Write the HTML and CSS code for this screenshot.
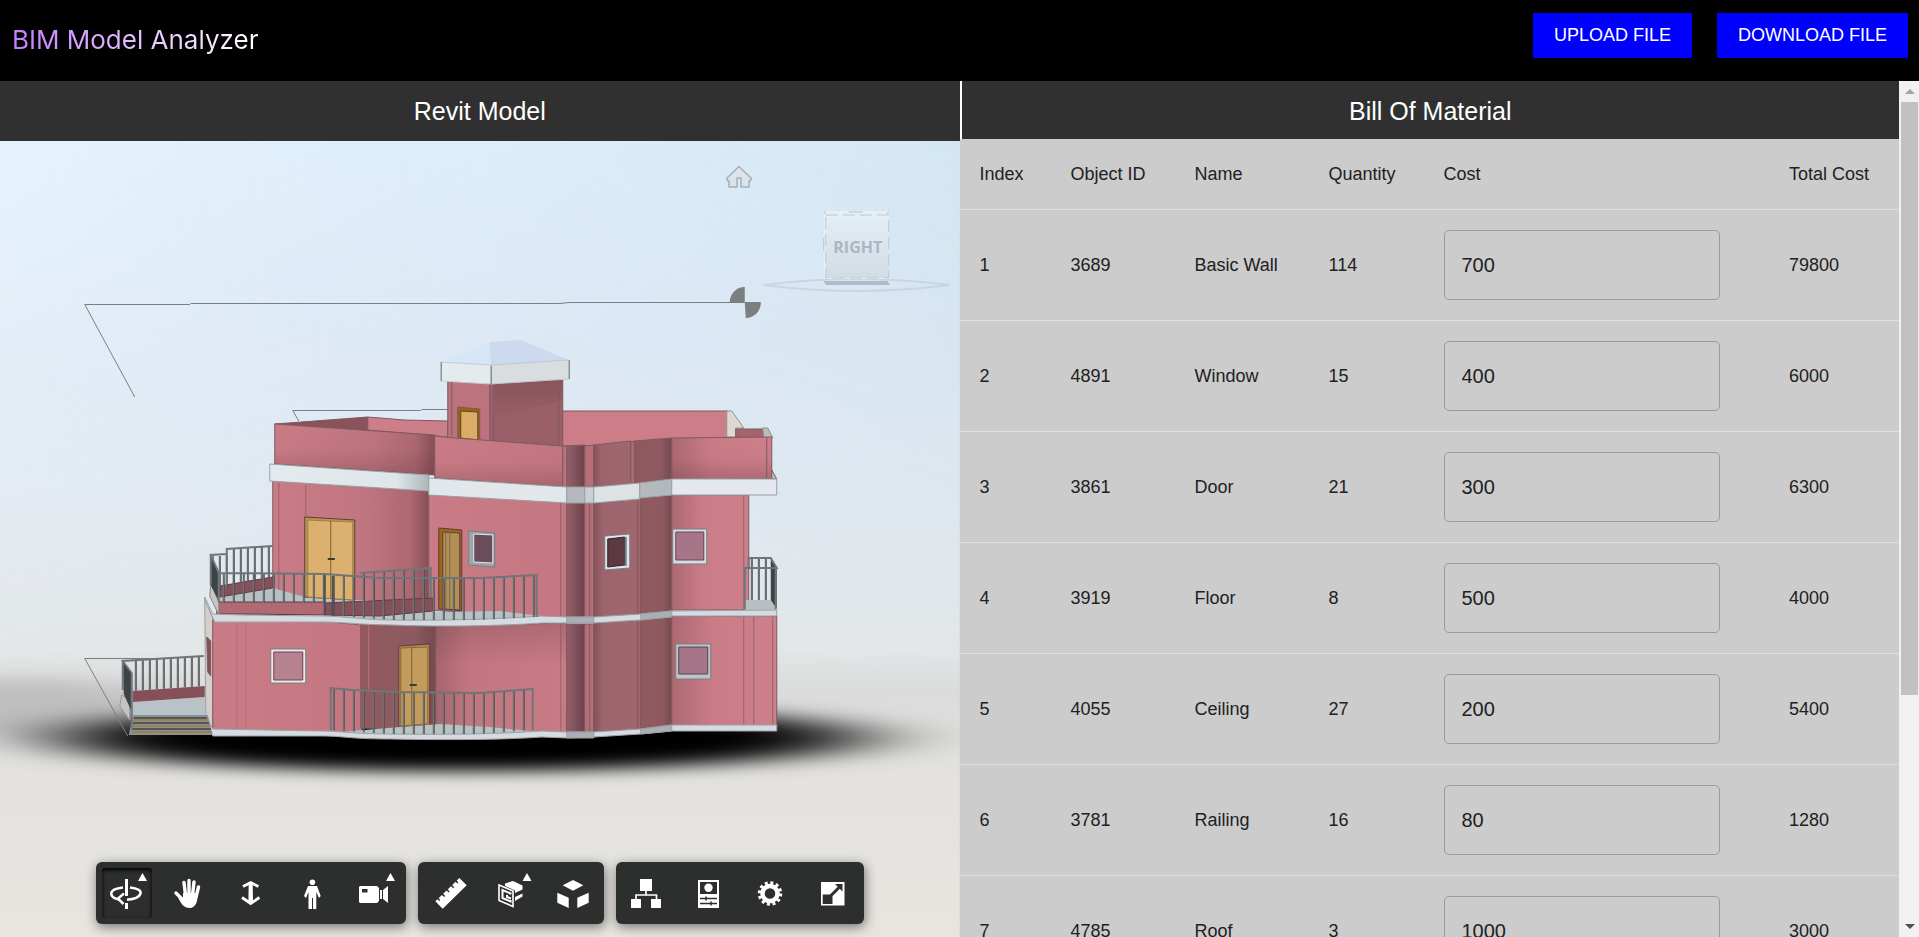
FILE: index.html
```html
<!DOCTYPE html>
<html lang="en">
<head>
<meta charset="utf-8">
<title>BIM Model Analyzer</title>
<link rel="stylesheet" href="styles.css">
</head>
<body>
<header class="topbar">
  <h1 class="brand">BIM Model Analyzer</h1>
  <div class="actions">
    <button class="action" type="button">UPLOAD FILE</button>
    <button class="action" type="button">DOWNLOAD FILE</button>
  </div>
</header>
<main class="workspace">
  <section class="viewer">
    <h2 class="panel-title">Revit Model</h2>
    <div class="stage">
      <svg class="scene" viewBox="0 141 960 796" preserveAspectRatio="xMidYMid slice" role="img" aria-label="House model">
        <defs>
          <linearGradient id="sky" x1="0" y1="0" x2="0" y2="1">
            <stop offset="0" stop-color="#e0effb"/><stop offset=".25" stop-color="#dfe9f5"/><stop offset=".5" stop-color="#e3e9ef"/><stop offset=".64" stop-color="#e3e7e7"/><stop offset=".69" stop-color="#dadbdb"/><stop offset=".8" stop-color="#e3e2df"/><stop offset="1" stop-color="#e8e5e0"/>
          </linearGradient>
          <linearGradient id="side" x1="0" y1="0" x2="1" y2="0">
            <stop offset="0" stop-color="#f1fbff" stop-opacity=".4"/><stop offset=".5" stop-color="#d5e8fa" stop-opacity=".25"/><stop offset="1" stop-color="#c4dde8" stop-opacity=".45"/>
          </linearGradient>
          <linearGradient id="fade" x1="0" y1="0" x2="0" y2="1"><stop offset="0" stop-color="#fff"/><stop offset="1" stop-color="#000"/></linearGradient>
          <mask id="skymask"><rect y="141" width="960" height="540" fill="url(#fade)"/></mask>
          <filter id="soft" x="-40%" y="-80%" width="180%" height="260%"><feGaussianBlur stdDeviation="60 8"/></filter>
          <filter id="haze" x="-60%" y="-50%" width="220%" height="200%"><feGaussianBlur stdDeviation="40 8"/></filter>
          <linearGradient id="curveR" x1="0" y1="0" x2="1" y2="0"><stop offset="0" stop-color="#ca7c86"/><stop offset=".6" stop-color="#bf757f"/><stop offset=".88" stop-color="#ad6871"/><stop offset="1" stop-color="#874e57"/></linearGradient>
          <linearGradient id="curveL" x1="0" y1="0" x2="1" y2="0"><stop offset="0" stop-color="#a5656f"/><stop offset=".25" stop-color="#c2767f"/><stop offset="1" stop-color="#c87b85"/></linearGradient>
          <linearGradient id="flat" x1="0" y1="0" x2="1" y2="0"><stop offset="0" stop-color="#ca7c86"/><stop offset="1" stop-color="#c47781"/></linearGradient>
          <linearGradient id="right" x1="0" y1="0" x2="1" y2="0"><stop offset="0" stop-color="#ac6972"/><stop offset=".4" stop-color="#ca7c87"/><stop offset="1" stop-color="#cd7f8a"/></linearGradient>
          <linearGradient id="dark" x1="0" y1="0" x2="1" y2="0"><stop offset="0" stop-color="#94606a"/><stop offset="1" stop-color="#6e424b"/></linearGradient>
          <linearGradient id="dark2" x1="0" y1="0" x2="1" y2="0"><stop offset="0" stop-color="#92595f"/><stop offset=".7" stop-color="#8d5a61"/><stop offset="1" stop-color="#774950"/></linearGradient>
          <linearGradient id="mid" x1="0" y1="0" x2="1" y2="0"><stop offset="0" stop-color="#875159"/><stop offset=".2" stop-color="#9d646d"/><stop offset="1" stop-color="#a1676f"/></linearGradient>
          <linearGradient id="shade" x1="0" y1="0" x2="0" y2="1"><stop offset="0" stop-color="#502d35" stop-opacity="0"/><stop offset=".5" stop-color="#502d35" stop-opacity=".03"/><stop offset="1" stop-color="#502d35" stop-opacity=".25"/></linearGradient>
          <linearGradient id="under" x1="0" y1="0" x2="0" y2="1"><stop offset="0" stop-color="#502d35" stop-opacity=".22"/><stop offset="1" stop-color="#502d35" stop-opacity="0"/></linearGradient>
          <linearGradient id="band" x1="0" y1="0" x2="1" y2="0"><stop offset="0" stop-color="#e4ebee"/><stop offset=".8" stop-color="#dfe6e9"/><stop offset="1" stop-color="#afb6b9"/></linearGradient>
          <linearGradient id="cube" x1="0" y1="0" x2="0" y2="1"><stop offset="0" stop-color="#e4eef6"/><stop offset="1" stop-color="#d1dce3"/></linearGradient>
          <pattern id="bars" width="10" height="20" patternUnits="userSpaceOnUse"><rect x="3" width="1" height="20" fill="#74797c"/><rect x="4" width="1" height="20" fill="#4a4f52"/></pattern>
          <pattern id="barsTight" width="7" height="20" patternUnits="userSpaceOnUse"><rect x="2" width="1" height="20" fill="#767b7e"/><rect x="3" width="1" height="20" fill="#45494c"/></pattern>
        </defs>
        <rect y="141" width="960" height="796" fill="url(#sky)"/>
        <rect y="141" width="960" height="540" fill="url(#side)" mask="url(#skymask)"/>
        <ellipse cx="20" cy="706" rx="140" ry="28" fill="#c0bebf" filter="url(#haze)"/>
        <ellipse cx="460" cy="738" rx="400" ry="33" fill="#060606" filter="url(#soft)"/>

        <g fill="none" stroke="#7b7f80">
          <path d="M135 397L85 304.500H190L191 303.500H560L570 302.500H745M299 421L293 410.500H421L422 409.500H448M163 658.500H85L128 736"/>
        </g>
        <path d="M745 302V287A15 15 0 0 0 730 302ZM745 302H761A15 15 0 0 1 746 318Z" fill="#7c7f80"/>

        <g stroke="#7d5a60" stroke-width="1" stroke-linejoin="round">
          <path d="M443 362L490 342L491 365Z" fill="#d5e6f7" stroke="none"/>
          <path d="M490 342L521 340L569 360L491 365Z" fill="#cbdaee" stroke="none"/>
          <path d="M562 411H728V438L672 440L600 446H562Z" fill="#cc7d87"/>
          <path d="M727 411H732L744 428H736V437H727Z" fill="#ded8d1" stroke="#8b9091"/>
          <path d="M736 429H764V438H736Z" fill="#a5636c"/><path d="M763 428H768L773 438H764Z" fill="#b9bfbf" stroke="#8b9091"/>
          <path d="M275 424L368 417V431Z" fill="#8b525b"/>
          <path d="M368 417L405 420L448 421V437L368 430Z" fill="#cc7f88"/>
          <path d="M448 380L491 384V442L448 438Z" fill="#bd737d"/>
          <path d="M490 384L563 379V446L490 441Z" fill="#9a5f68"/>
          <path d="M495 384L563 380V399L495 420Z" fill="url(#under)" stroke="none"/>
          <path d="M452 382V436M494 384V440M559 380V444" fill="none"/>
          <path d="M458 407L480 409V440L458 437Z" fill="#9a6410"/><path d="M461 411L478 412V440L461 438Z" fill="#dcab6a" stroke="#5f4523"/>
          <path d="M441 362L491 365V384L441 381Z" fill="#e4ebee" stroke="#c3cccf"/><path d="M491 365L569 360V379L491 384Z" fill="#d9dde0" stroke="#bfc5c8"/>
          <path d="M441.500 362V381M491.500 366V384M569.500 360V379" stroke="#74797b"/>
          <path d="M275 424L435 435V475L275 464Z" fill="url(#curveR)"/>
          <path d="M275 424L435 435V475L275 464Z" fill="url(#shade)" stroke="none"/>
          <path d="M435 436L455 438L563 446V487L435 478Z" fill="url(#flat)"/>
          <path d="M435 437L563 446V487L435 478Z" fill="url(#shade)" stroke="none"/>
          <path d="M563 446H567V487H563Z" fill="#bd737c"/><path d="M567 446L585 445V487H567Z" fill="url(#dark)"/>
          <path d="M585 446L594 445V487H585Z" fill="#b66f78"/><path d="M594 445L631 441V484L594 487Z" fill="url(#mid)"/><path d="M631 442L635 441V484H631Z" fill="#ab6a73"/>
          <path d="M635 441L672 438V480L635 484Z" fill="url(#dark2)"/><path d="M672 438L772 437V479L672 480Z" fill="url(#right)"/><path d="M672 438L772 437V479L672 480Z" fill="url(#shade)" stroke="none"/><path d="M767 438V479"/>
          <path d="M772 470L777 479H772Z" fill="#bac0c0"/>

          <path d="M273 480L429 490V611L325 605L273 599Z" fill="url(#curveR)"/>
          <path d="M429 494L567 502V618L500 615L429 610Z" fill="url(#flat)"/>
          <path d="M567 503H585V618H567Z" fill="url(#dark)"/><path d="M585 502H594V618H585Z" fill="#b66f78"/><path d="M590 503V618"/>
          <path d="M594 503L641 498V614L594 618Z" fill="url(#mid)"/><path d="M641 498L672 495V611L641 614Z" fill="url(#dark2)"/><path d="M638 499V614"/>
          <path d="M672 495H749V610H672Z" fill="url(#right)"/><path d="M744 496V610M279 483V596M306 485V517M561 503V617" opacity=".7"/>

          <path d="M205 598L213 618V732L206 716Z" fill="#d3cfca" stroke="#9d9f9e"/>
          <path d="M207 637L211 641V676L208 672Z" fill="#8a4d57"/>
          <path d="M213 620L320 621L362 625V732H320L213 730Z" fill="url(#flat)"/>
          <path d="M361 624L436 626V730L361 728Z" fill="url(#dark2)"/><path d="M369 625V690" stroke="#ba717a"/>
          <path d="M436 626L567 623V733L436 735Z" fill="url(#curveL)"/>
          <path d="M436 626L567 623V665L436 665Z" fill="url(#under)" stroke="none"/>
          <path d="M567 624H585V733H567Z" fill="url(#dark)"/><path d="M585 624H594V733H585Z" fill="#b66f78"/><path d="M590 624V732"/>
          <path d="M594 623L641 619V730L594 733Z" fill="url(#mid)"/><path d="M641 619L672 616V727L641 731Z" fill="url(#dark2)"/><path d="M638 620V730"/>
          <path d="M672 616H777V726H672Z" fill="url(#right)"/><path d="M744 617V725M754 617V725M773 617V725M561 624V732" opacity=".7"/><path d="M237 622V729M246 622V730" opacity=".3"/>
        </g>

        <g stroke="#9aa0a3">
          <path d="M270 464L429 475V491L270 481Z" fill="url(#band)"/><path d="M429 478L567 487V503L429 495Z" fill="#e1e7ea"/>
          <path d="M567 487H585V503H567Z" fill="#b3b9bd"/><path d="M585 487H594V503H585Z" fill="#cbd0d3"/><path d="M594 487L640 483V499L594 503Z" fill="#dde2e5"/>
          <path d="M640 483L672 479V495L640 498Z" fill="#b3b9bd"/><path d="M672 479H777V495H672Z" fill="#e3e8ef"/>
        </g>

        <path d="M219 597L273 588L305 597L355 600L431 600L433 612L500 611L541 616L480 622L393 621L325 615H218Z" fill="#b7c0c2"/>
        <path d="M745 600H771L777 610H745Z" fill="#b7c0c2"/>
        <g stroke="#5e3b42">
          <path d="M220 586L273 577V588L220 597Z" fill="#85505a"/>
          <path d="M305 517L355 520V600L305 597Z" fill="#b99753"/><path d="M308 520L353 522V600L308 597Z" fill="#dcb06e" stroke="#a07c42"/><path d="M331 521V598" stroke="#7d6235"/><path d="M328 559H335" stroke="#3c3a36" stroke-width="2"/>
          <path d="M439 528L462 530V611L439 609Z" fill="#a06710"/><path d="M443 532L460 533V610L443 609Z" fill="#b18f57"/><path d="M446 532V609M450 532V609" stroke="#816b44"/>
          <path d="M399 646L430 644V725L399 727Z" fill="#b08b4b"/><path d="M401 648L428 647V724L401 726Z" fill="#c39b5c" stroke="#8a6938"/><path d="M412 647V725" stroke="#7d6235"/><path d="M410 685H417" stroke="#3c3a36" stroke-width="2"/>
          <path d="M217 602H325L326 615L243 614H217Z" fill="#b16974"/><path d="M325 603L433 598V611L380 616L325 615Z" fill="#85505a"/>
          <path d="M211 584L219 602V615L210 596Z" fill="#c9c5c0" stroke="#858b8e"/>
        </g>

        <g stroke="#777e82">
          <path d="M271 649H306V683H271Z" fill="#e7ebee"/><path d="M274 652H303V680H274Z" fill="#b6828f" stroke="#7e3c4a"/>
          <path d="M469 531L495 533V567L469 565Z" fill="#9ca7ad"/><path d="M474 534L493 535V563L474 562Z" fill="#6b4c5a" stroke="#e1e7e9"/>
          <path d="M605 536L630 534V568L605 570Z" fill="#dfe5e8"/><path d="M608 539L625 537V565L608 567Z" fill="#5c3843" stroke="#342128"/><path d="M626 537V566" stroke-width="2"/>
          <path d="M673 529H707V564H673Z" fill="#d5dbdf"/><path d="M676 532H704V560H676Z" fill="#a77588" stroke="#6f4351"/>
          <path d="M676 644H711V679H676Z" fill="#bec5ca"/><path d="M679 647H708V674H679Z" fill="#a77588" stroke="#54474d"/>
        </g>

        <path d="M340 732L400 727L440 724L490 727L540 732L480 737H380Z" fill="#b7c2c3"/>
        <g stroke="#9aa0a3" fill="#d6dbe1">
          <path d="M205 597L213 614L243 615L320 616C345 616 363 620 393 620C440 621 500 619 542 616L567 617H594L641 614L672 611L777 610V616H672L641 620L594 623H567L542 623C500 626 440 627 393 625C363 625 345 622 320 622H215L205 600Z"/>
          <path d="M213 729L320 731C345 731 350 734 390 734C440 735 500 734 542 731L567 732H594L641 729L672 725H777V731H672L641 734L594 737L567 738L542 737C500 740 440 740 390 739C350 739 345 736 320 736H213L206 722V716Z"/>
          <path d="M567 617H594V623H567ZM567 732H594V738H567ZM641 614L672 611V617L641 620ZM641 729L672 725V731L641 734Z" fill="#a9afb4"/>
        </g>

        <path d="M132 703L205 697L206 716H132Z" fill="#b7c3c6"/><path d="M133 691L205 686V697L133 702Z" fill="#85505a"/>
        <path d="M133 715H208L213 735H129Z" fill="#8a9096"/><path d="M134 720H208M133 726H210M132 732H212" stroke="#9c8248" stroke-width="2"/><path d="M134 718H207M133 723H209M133 729H211" stroke="#50565c" stroke-width="2"/>
        <path d="M122 695L130 700V720L120 706Z" fill="#c8c3c0" stroke="#999"/>
        <g fill="url(#barsTight)">
          <path d="M228 549L273 546V577L228 585Z"/><path d="M134 661L204 656V686L134 691Z"/><path d="M213 556H228V590H219Z"/><path d="M750 559H771V600H750Z"/>
        </g>
        <g fill="url(#bars)">
          <path d="M219 573L325 574V603H219Z"/><path d="M325 575L380 578L480 578L537 575V617L480 620H393L325 615Z"/><path d="M360 573L431 568V598L360 603Z"/>
          <path d="M331 688L353 690L397 692L480 693L533 689V730L480 734H390L331 730Z"/>
        </g>
        <path d="M211 555L219 573V601L211 585ZM123 661L132 673V712L124 694ZM771 559L777 569V609L771 600Z" fill="#3e4346"/>
        <g fill="none" stroke="#6f7578" stroke-width="2">
          <path d="M227 585V549L273 546M219 602V573L211 555L227 554M211 555V585M219 573L325 574L380 578H480L537 575V617M360 573L431 568V598M331 730V688L353 690L397 692L480 693L533 689V730M132 730V673L123 661L204 656M123 661V690M749 568V558H771L777 568H745V609M776 568V609"/>
          <path d="M325 575V615M333 576V616" stroke="#4a4f52"/>
        </g>

        <path d="M764 285Q857 273 950 285Q857 297 764 285Z" fill="none" stroke="#c2ced9" stroke-width="2" opacity=".7"/>
        <path d="M824 281H888L890 285H826Z" fill="#afbbc5"/>
        <path d="M824 211H889V279H824Z" fill="#e5eff6"/><path d="M826 214H889V278H826Z" fill="url(#cube)"/>
        <path d="M826 215H889V278H826Z" fill="none" stroke="#bcc8d0" stroke-width="1" stroke-dasharray="12 5"/>
        <path d="M824 211L826 214M889 211L887 214M849 212H863M824 238V251" stroke="#b8c4cc"/>
        <text class="cube-label" x="858" y="253" text-anchor="middle">RIGHT</text>
      </svg>
      <button class="home" type="button" aria-label="Home"><svg viewBox="0 0 28 24"><path d="M14 1.500L1.500 13.500L3 16H4V22H12V13H16V22H24V16H25L26.500 13.500Z" fill="#dce3e9" stroke="#a4afb8" stroke-width="1.500" stroke-linejoin="round"/></svg></button>
      <div class="toolbar">
        <div class="tool-group">
          <button class="tool tool-active" type="button" aria-label="Orbit"><svg viewBox="0 0 62 62"><path d="M27 25.500C11 27 13 36 23 37.500M34 25.500C50 27 47 36 31 37.800" fill="none" stroke="#fff" stroke-width="2.500"/><path d="M28 31.500L22 36.500L27.500 42" fill="none" stroke="#fff" stroke-width="2.500"/><path d="M29 17H32V34H29ZM29 41H32V47H29Z"/><path d="M46.500 11L51 19H42Z"/></svg></button>
          <button class="tool" type="button" aria-label="Pan"><svg viewBox="0 0 62 62"><path d="M26 20.500L27.500 33M31 18.500V33M36 20L34.500 33M40.500 25L38 35M18 31L25 38" stroke="#fff" stroke-width="3.400" stroke-linecap="round"/><path d="M25 31H39.500C40 39 38 46 31.500 46C26 46 23 42 20 35L25 36Z"/></svg></button>
          <button class="tool" type="button" aria-label="Dolly"><svg viewBox="0 0 62 62"><path d="M28.700 22H32.700L33 40H28.400Z"/><path d="M23 24.500L30.700 20.500L38.400 24.500M22 35.500L30.700 41.500L39.400 35.500" fill="none" stroke="#fff" stroke-width="2.800"/></svg></button>
          <button class="tool" type="button" aria-label="Walk"><svg viewBox="0 0 62 62"><circle cx="30.400" cy="20.300" r="2.800"/><path d="M26 24H35L38.700 34L37 36L34.300 30V47H31V36H30V47H26.500V30L24 36L22 34Z"/></svg></button>
          <button class="tool" type="button" aria-label="Camera"><svg viewBox="0 0 62 62"><path fill-rule="evenodd" d="M16 24H33L35 26V39L33 41H16L15 40V25ZM18 27V30.500H23.500V27Z"/><path d="M36 28H38V37H36ZM39 28L44 24V41L39 37Z"/><path d="M46.500 11L51 19H42Z"/></svg></button>
        </div>
        <div class="tool-group">
          <button class="tool" type="button" aria-label="Measure"><svg viewBox="0 0 62 62"><path d="M41.300 16L48.700 23.300L24.700 46.700L17.300 39.300L19.500 37.200L21.200 38.900L22.200 37.900L20.700 36L24 33L26.200 35L27.200 34L25.200 31.800L28.500 28.600L30.700 30.600L31.700 29.600L29.700 27.400L33 24.200L35.200 26.200L36.200 25.200L34.200 23L37.500 19.800L39.300 21.600L40.300 20.600L38.800 18.500Z"/></svg></button>
          <button class="tool" type="button" aria-label="Section"><svg viewBox="0 0 62 62"><path fill="none" stroke="#fff" stroke-width="1.600" d="M19 23L33 29V44.500L19 38.500Z"/><path d="M25 21.500L33 19L42.500 23.500V27.500L35 31V28.500L25 24ZM35 35L42.500 31.500V34.500L35 39Z"/><path fill="none" stroke="#fff" stroke-width="2" d="M30.500 32.500V31.500L22.500 28V36L30.500 39.500V38M27 33V35L31 36.500"/><path d="M47 11L51.500 19H42.500Z"/></svg></button>
          <button class="tool" type="button" aria-label="Explode"><svg viewBox="0 0 62 62"><path d="M31 18L41.300 23.300L31 28.700L20.700 23.300ZM15.300 30.700L26.700 35.700V46L15.300 40.700ZM35.300 35.700L46.700 30.700V40.700L35.300 46Z"/></svg></button>
        </div>
        <div class="tool-group">
          <button class="tool" type="button" aria-label="Model browser"><svg viewBox="0 0 62 62"><path d="M24 17H36V29H24ZM15 37H25V46H15ZM35 37H45V46H35Z"/><path d="M30 28V33M20 38V33H40.500V38" fill="none" stroke="#fff" stroke-width="1.700"/></svg></button>
          <button class="tool" type="button" aria-label="Properties"><svg viewBox="0 0 62 62"><path fill-rule="evenodd" d="M20 18H41V46H20ZM22 20V32H39V20Z"/><circle cx="30.500" cy="25.700" r="4.200"/><path d="M22 36.500H39M22 41.500H39M28 34.500V38.500M33 39.500V43.500" stroke="#2d2e2e" stroke-width="1.500"/></svg></button>
          <button class="tool" type="button" aria-label="Settings"><svg viewBox="0 0 62 62"><circle cx="30" cy="31.500" r="7.500" fill="none" stroke="#fff" stroke-width="4.500"/><circle cx="30" cy="31.500" r="10.500" fill="none" stroke="#fff" stroke-width="3.500" stroke-dasharray="2.900 2.600"/></svg></button>
          <button class="tool" type="button" aria-label="Full screen"><svg viewBox="0 0 62 62"><path fill-rule="evenodd" d="M19 20H42.500V43.500H19ZM20.700 32.500V42H30.500V32.500Z"/><path d="M28 34.500L38 24.500" stroke="#2d2e2e" stroke-width="3"/><path d="M33 22H40.500V29.500Z" fill="#2d2e2e"/></svg></button>
        </div>
      </div>
    </div>
  </section>
  <section class="bom">
    <div class="bom-body">
      <h2 class="panel-title bom-title">Bill Of Material</h2>
      <table class="materials">
        <colgroup><col class="c-index"><col class="c-id"><col class="c-name"><col class="c-qty"><col class="c-cost"><col class="c-total"></colgroup>
        <thead><tr><th>Index</th><th>Object ID</th><th>Name</th><th>Quantity</th><th>Cost</th><th>Total Cost</th></tr></thead>
        <tbody>
          <tr><td>1</td><td>3689</td><td>Basic Wall</td><td>114</td><td><input class="cost" type="text" aria-label="Basic Wall cost" value="700"></td><td>79800</td></tr>
          <tr><td>2</td><td>4891</td><td>Window</td><td>15</td><td><input class="cost" type="text" aria-label="Window cost" value="400"></td><td>6000</td></tr>
          <tr><td>3</td><td>3861</td><td>Door</td><td>21</td><td><input class="cost" type="text" aria-label="Door cost" value="300"></td><td>6300</td></tr>
          <tr><td>4</td><td>3919</td><td>Floor</td><td>8</td><td><input class="cost" type="text" aria-label="Floor cost" value="500"></td><td>4000</td></tr>
          <tr><td>5</td><td>4055</td><td>Ceiling</td><td>27</td><td><input class="cost" type="text" aria-label="Ceiling cost" value="200"></td><td>5400</td></tr>
          <tr><td>6</td><td>3781</td><td>Railing</td><td>16</td><td><input class="cost" type="text" aria-label="Railing cost" value="80"></td><td>1280</td></tr>
          <tr><td>7</td><td>4785</td><td>Roof</td><td>3</td><td><input class="cost" type="text" aria-label="Roof cost" value="1000"></td><td>3000</td></tr>
        </tbody>
      </table>
    </div>
    <div class="scrollbar" aria-hidden="true">
      <span class="arrow arrow-up"></span>
      <span class="thumb"></span>
      <span class="track-rest"></span>
      <span class="arrow arrow-down"></span>
    </div>
  </section>
</main>
</body>
</html>
```
FILE: styles.css
```css
* { box-sizing: border-box; }
body {
  margin: 0;
  height: 100vh;
  display: flex;
  flex-direction: column;
  overflow: hidden;
  background: #ccc;
  color: #212121;
  font-family: "Liberation Sans", Arial, sans-serif;
}
button { border: 0; padding: 0; font-family: inherit; cursor: pointer; }

.topbar {
  display: flex;
  justify-content: space-between;
  align-items: flex-start;
  padding: 13px 11px 23px 12px;
  background: #000;
}
.brand {
  margin: 9px 0 0;
  font: 400 26px/36px Inter, sans-serif;
  color: transparent;
  background: linear-gradient(90deg, #c77dff, #fff);
  background-clip: text;
  -webkit-background-clip: text;
}
.actions { display: flex; gap: 25px; }
.action {
  height: 45px;
  padding: 0 21px 1px;
  background: #00f;
  color: #fff;
  font-size: 18px;
}

.workspace { flex: 1; min-height: 0; display: flex; }
.viewer { flex: 1; min-width: 0; display: flex; flex-direction: column; }
.panel-title {
  margin: 0;
  padding: 15px 0;
  background: #303030;
  color: #fff;
  font-size: 25px;
  font-weight: 400;
  line-height: 30px;
  text-align: center;
}
.stage { position: relative; flex: 1; min-height: 0; overflow: hidden; }
.scene { display: block; width: 100%; height: 100%; }
.cube-label { font: 700 16px "Open Sans", sans-serif; fill: #abb7c2; }
.home {
  position: absolute;
  top: 24px;
  right: 207px;
  width: 28px;
  height: 24px;
  background: none;
}
.home svg, .tool svg { display: block; width: 100%; height: 100%; }
.toolbar {
  position: absolute;
  left: 0;
  right: 0;
  bottom: 13px;
  display: flex;
  justify-content: center;
  gap: 12px;
}
.tool-group {
  display: flex;
  border-radius: 6px;
  background: #2d2e2e;
  box-shadow: 1px 3px 12px rgba(0, 0, 0, .5);
}
.tool { position: relative; width: 62px; height: 62px; background: none; }
.tool svg { fill: #fff; }
.tool-active::before {
  content: "";
  position: absolute;
  inset: 6px;
  border-radius: 3px;
  box-shadow: inset 0 2px 4px #000;
}

.bom { flex: 1; min-width: 0; display: flex; }
.bom-body { flex: 1; min-width: 0; overflow: hidden; }
.bom-title { padding: 15px 0 13px; border-left: 2px solid #fff; }
.materials {
  width: 100%;
  table-layout: fixed;
  border-collapse: separate;
  border-spacing: 0;
  font-size: 18px;
  line-height: 30px;
}
.c-index { width: 91px; }
.c-id { width: 124px; }
.c-name { width: 134px; }
.c-qty { width: 115px; }
.c-total { width: 130px; }
.materials th, .materials td {
  padding: 20px 0 20px 20px;
  border-bottom: 1px solid #e0e0e0;
  font-weight: 400;
  text-align: left;
  white-space: nowrap;
}
.cost {
  display: block;
  width: 85%;
  height: 70px;
  padding: 0 17px;
  border: 1px solid #9a9a9a;
  border-radius: 5px;
  background: transparent;
  color: #212121;
  font: 20px "Liberation Sans", Arial, sans-serif;
}

.scrollbar {
  width: 20px;
  display: flex;
  flex-direction: column;
  padding: 0 1px 0 2px;
  background: #f1f1f1;
}
.arrow { height: 21px; display: flex; align-items: center; justify-content: center; }
.arrow::before { content: ""; border: 5px solid transparent; }
.arrow-up::before { border-top: 0; border-bottom-color: #a3a3a3; }
.arrow-down::before { border-bottom: 0; border-top-color: #505050; }
.thumb { flex: 593; background: #c1c1c1; }
.track-rest { flex: 221; }
```
